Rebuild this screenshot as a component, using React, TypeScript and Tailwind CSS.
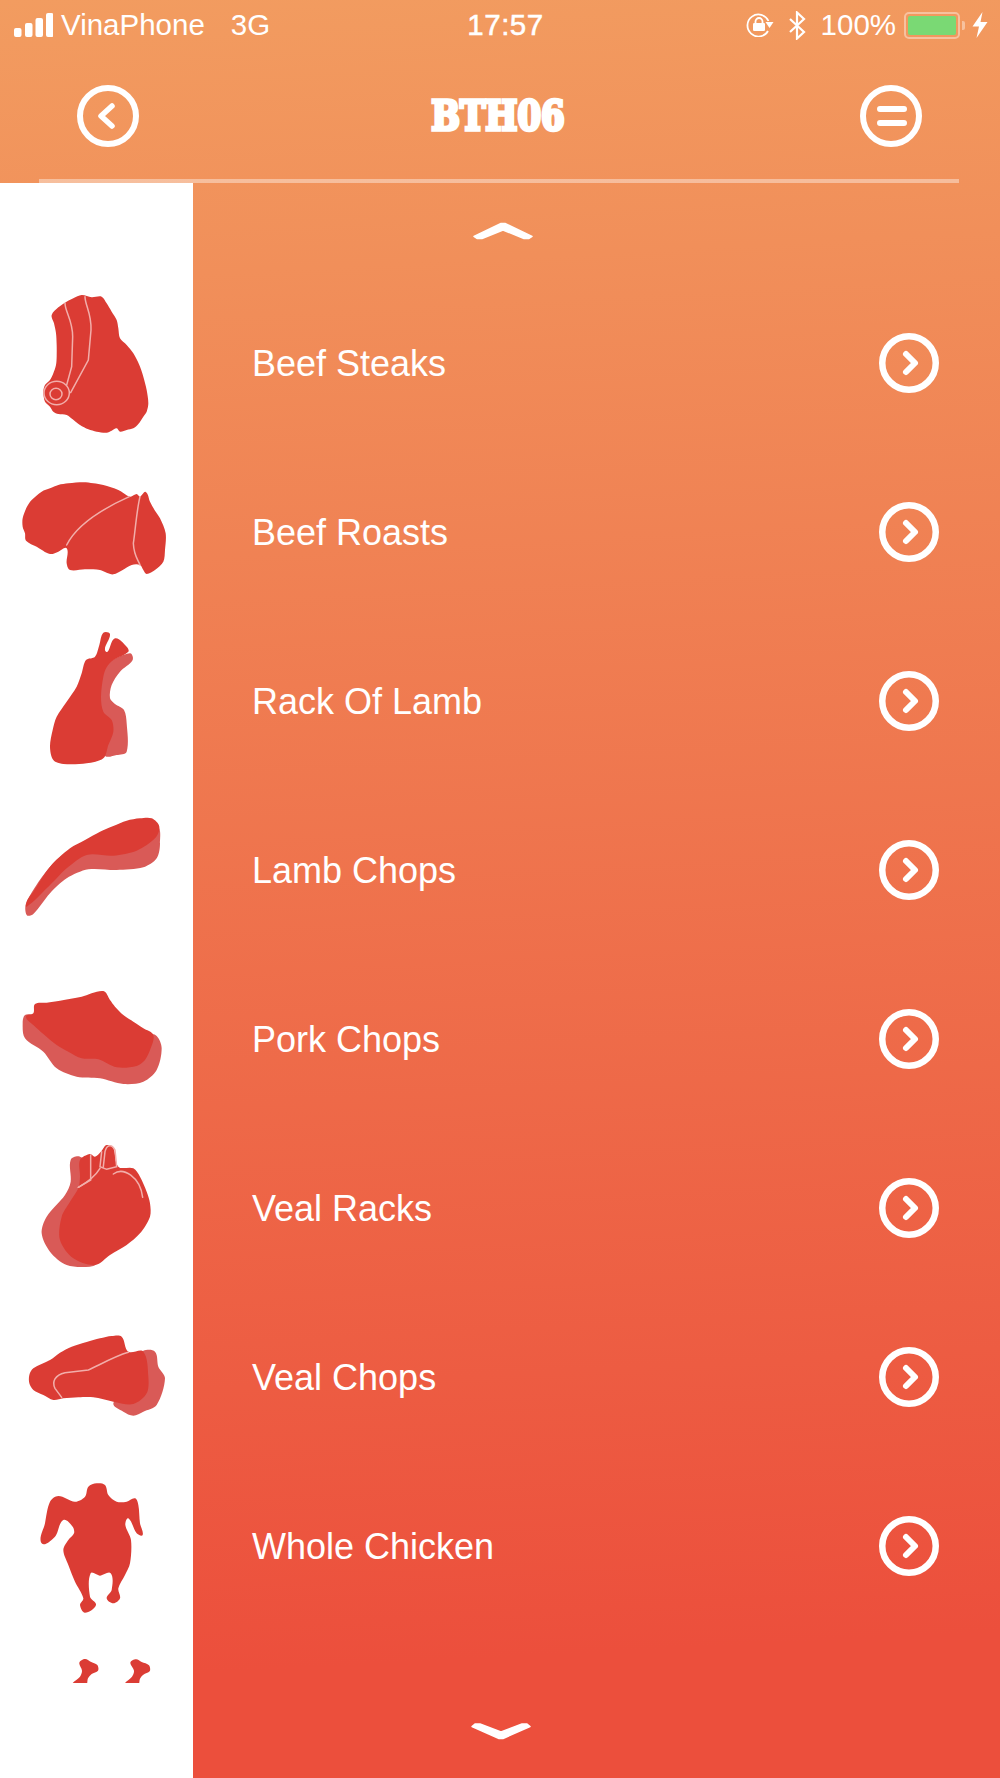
import React from "react";

type P = number[];
const path = (p: P) => {
  const n = p.length / 2;
  const g = (i: number) => {
    const k = ((i % n) + n) % n;
    return [p[k * 2], p[k * 2 + 1]];
  };
  const tan = (i: number) => {
    const a = g(i - 1), c = g(i + 1);
    const dx = c[0] - a[0], dy = c[1] - a[1];
    const l = Math.hypot(dx, dy) || 1;
    return [dx / l, dy / l];
  };
  let d = `M${p[0]} ${p[1]}`;
  for (let i = 0; i < n; i++) {
    const b = g(i), c = g(i + 1);
    const len = Math.hypot(c[0] - b[0], c[1] - b[1]) * 0.3;
    const t0 = tan(i), t1 = tan(i + 1);
    d += ` C${(b[0] + t0[0] * len).toFixed(1)} ${(b[1] + t0[1] * len).toFixed(1)} ${(c[0] - t1[0] * len).toFixed(1)} ${(c[1] - t1[1] * len).toFixed(1)} ${c[0]} ${c[1]}`;
  }
  return d + "Z";
};

const DARK = "#db3c34";
const LIGHT = "#d95a57";
const SEAM = "#f2aeaa";

type Meat = { vb: string; light?: P[]; dark: P[]; lines?: string[]; rings?: number[][]; h?: number };

const meats: Meat[] = [
  {
    vb: "0 24 579 507",
    dark: [[155,135,175,112,195,98,220,85,245,75,275,82,305,80,320,100,335,125,350,150,355,175,360,205,380,225,400,250,418,285,430,320,440,360,445,400,440,425,430,440,415,462,400,475,380,480,360,485,350,475,335,482,320,488,290,485,265,478,240,465,218,448,200,435,175,432,160,425,150,410,135,395,130,365,135,345,150,330,160,310,168,285,170,260,170,225,168,190,162,160]],
    lines: ["M195 100C195 125 218 150 218 200L215 290L200 345", "M255 80C255 105 275 130 273 180L265 270L212 368"],
    rings: [[170,369,38,35],[168,372,18,17]],
  },
  {
    vb: "0 531 579 507",
    dark: [[68,745,80,712,95,690,125,665,150,655,175,645,205,640,250,637,280,640,310,645,355,660,390,680,410,672,420,680,437,666,450,695,465,722,480,745,497,790,495,840,490,875,465,900,440,912,430,900,420,885,395,885,368,900,340,913,320,908,300,900,255,898,210,900,200,880,200,835,175,845,150,852,110,830,78,812,75,790,68,770]],
    lines: ["M388 680C310 715 230 765 200 825", "M420 680C410 720 405 790 400 820C402 860 415 870 420 885"],
  },
  {
    vb: "0 18 579 507",
    light: [[280,200,320,160,390,130,398,150,360,185,335,225,330,265,345,282,372,300,380,340,380,425,350,435,315,438,280,380]],
    dark: [[150,410,158,360,170,320,200,275,230,230,245,190,258,150,285,140,298,105,310,68,330,72,318,125,345,85,380,110,385,125,340,150,320,172,310,200,303,260,310,305,335,330,340,365,325,405,310,445,260,460,190,462,160,450]],
  },
  {
    vb: "0 525 579 507",
    light: [[80,875,160,760,250,700,470,650,480,700,470,745,430,772,350,780,265,778,200,805,150,850,100,912,80,915]],
    dark: [[80,890,82,870,100,845,150,770,210,715,255,690,300,665,340,648,380,632,420,625,455,625,478,650,465,685,410,722,340,737,260,735,200,775,170,805,140,835]],
  },
  {
    vb: "0 -18 579 507",
    light: [[68,190,75,165,100,165,300,220,440,220,470,228,485,265,470,330,430,365,370,372,300,355,230,350,170,325,130,275,75,235]],
    dark: [[78,170,100,160,105,132,140,128,180,122,245,110,310,93,330,120,345,140,370,165,400,185,430,205,460,225,452,265,435,300,410,318,350,322,295,298,245,295,205,275,170,255,130,222,100,195]],
  },
  {
    vb: "0 489 579 507",
    light: [[212,600,240,590,270,620,260,700,230,760,220,830,240,870,290,908,270,920,200,915,150,875,125,820,140,770,195,705,212,665]],
    dark: [[240,600,270,582,285,590,305,572,320,555,340,565,355,620,400,625,420,650,440,695,450,730,450,770,420,820,380,855,330,885,285,915,220,895,180,840,185,770,210,725,235,685,240,650]],
    lines: ["M272 585L272 660L235 682", "M235 682C265 665 285 650 300 625", "M305 575L300 620L320 628L350 620L345 570C335 550 320 555 315 575L310 620", "M340 642C370 620 420 650 428 712"],
  },
  {
    vb: "0 -54 579 507",
    light: [[430,122,465,125,475,170,495,205,470,285,430,305,400,317,370,305,340,280,380,250,420,200,420,140]],
    dark: [[88,195,100,175,150,150,180,128,215,110,260,96,300,85,335,78,365,80,385,125,430,125,445,200,440,250,400,282,340,275,280,262,235,262,190,265,160,270,130,255,100,240,88,220]],
    lines: ["M385 127C340 140 290 170 265 180L195 188C165 195 155 215 165 235L185 262"],
  },
  {
    vb: "0 453 579 507",
    dark: [[265,530,290,520,315,525,325,555,350,575,380,575,405,565,415,585,420,640,428,675,410,670,385,625,376,645,393,690,390,760,375,795,355,835,360,865,340,880,320,865,335,840,332,790,300,797,272,790,270,860,288,885,255,908,240,885,250,865,225,815,205,765,190,720,205,690,222,670,218,650,190,630,165,680,125,700,135,640,150,575,175,558,225,575,255,560]],
  },
  {
    vb: "0 960 579 159",
    h: 53,
    dark: [[238,1058,255,1047,272,1055,292,1065,294,1082,275,1092,264,1105,258,1125,218,1125,240,1100,246,1082],[391,1058,408,1048,425,1056,447,1066,449,1084,430,1094,420,1106,414,1125,375,1125,396,1100,402,1082]],
  },
];

const MeatIcon = ({ m }: { m: Meat }) => (
  <svg viewBox={m.vb} className={m.h ? "block w-[193px] h-[53px]" : "block w-[193px] h-[169px]"}>
    {m.light?.map((p, i) => <path key={i} d={path(p)} fill={LIGHT} />)}
    {m.dark.map((p, i) => <path key={i} d={path(p)} fill={DARK} />)}
    {m.lines?.map((d, i) => <path key={i} d={d} fill="none" stroke={SEAM} strokeWidth={4.5} strokeLinecap="round" />)}
    {m.rings?.map((r, i) => <ellipse key={i} cx={r[0]} cy={r[1]} rx={r[2]} ry={r[3]} fill="none" stroke={SEAM} strokeWidth={4.5} />)}
  </svg>
);

const Circle = ({ children, size = 62, sw = 6 }: { children: React.ReactNode; size?: number; sw?: number }) => (
  <svg width={size} height={size} viewBox={`0 0 ${size} ${size}`} fill="none" stroke="#fff" className="block shrink-0">
    <circle cx={size / 2} cy={size / 2} r={size / 2 - sw / 2} strokeWidth={sw} />
    {children}
  </svg>
);

const items = ["Beef Steaks", "Beef Roasts", "Rack Of Lamb", "Lamb Chops", "Pork Chops", "Veal Racks", "Veal Chops", "Whole Chicken"];

export default function App() {
  return (
    <div className="w-[1000px] h-[1778px] overflow-hidden bg-[linear-gradient(177deg,#f29c60_0%,#ec4f3c_92%)] text-white font-['Liberation_Sans',Arial,sans-serif]">
      <header className="h-[183px] flex flex-col">
        <div className="h-[50px] flex items-center text-[29.5px] leading-none">
          <div className="flex-1 flex items-center pl-[14px]">
            <svg width="39" height="24" viewBox="0 0 39 24" fill="#fff" className="block">
              <rect x="0" y="15" width="7.5" height="9" rx="2" />
              <rect x="11" y="10" width="7.5" height="14" rx="2" />
              <rect x="21.5" y="5" width="7.5" height="19" rx="2" />
              <rect x="32" y="0" width="7.5" height="24" rx="2" />
            </svg>
            <span className="ml-[8px]">VinaPhone</span>
            <span className="ml-[26px]">3G</span>
          </div>
          <span className="ml-[9px] font-medium tracking-[0.5px] [-webkit-text-stroke:0.5px_white]">17:57</span>
          <div className="flex-1 flex items-center justify-end pr-[12px]">
            <svg width="28" height="24" viewBox="0 0 28 24" fill="none" stroke="#fff" strokeWidth="1.8" className="block">
              <path d="M22 18A11 11 0 1 1 22.5 8" />
              <path d="M19.5 9H27.5L23.5 15Z" fill="#fff" stroke="none" />
              <path d="M9.5 10V8.5a3.5 3.5 0 0 1 7 0V10" strokeWidth="1.8" />
              <rect x="7" y="10" width="12" height="8" rx="1.3" fill="#fff" stroke="none" />
            </svg>
            <svg width="17" height="29" viewBox="0 0 17 29" fill="none" stroke="#fff" strokeWidth="2.2" className="block ml-[15px]">
              <path d="M1 8L15 21L8 27.5V1.5L15 8L1 21" />
            </svg>
            <span className="ml-[15px]">100%</span>
            <div className="ml-[8px] w-[56px] h-[27px] rounded-[5px] border-2 border-white/40 p-[2px]">
              <div className="w-full h-full bg-[#7ad974] rounded-[2px]" />
            </div>
            <div className="ml-[2px] w-[3px] h-[9px] bg-white/40 rounded-r-[2px]" />
            <svg width="16" height="26" viewBox="0 0 16 26" fill="#fff" className="block ml-[7px]">
              <path d="M10.5 0L0.5 14.5H7L4.5 26L15.5 10H8.5Z" />
            </svg>
          </div>
        </div>
        <div className="mt-[35px] h-[62px] flex items-center justify-between pl-[77px] pr-[78px]">
          <Circle>
            <path d="M35 21L24 31L35 41" strokeWidth="5.5" strokeLinecap="round" strokeLinejoin="round" />
          </Circle>
          <h1 className="font-['DejaVu_Serif',serif] font-bold text-[34px] leading-none scale-y-[1.2] [-webkit-text-stroke:3px_white] ml-[-3px]">BTH06</h1>
          <Circle>
            <path d="M20 24H44M20 38H44" strokeWidth="6" strokeLinecap="round" />
          </Circle>
        </div>
        <div className="mt-[32px] h-[4px] ml-[39px] mr-[41px] bg-white/40" />
      </header>
      <div className="flex h-[1595px]">
        <aside className="w-[193px] bg-white pt-[95px]">
          {meats.map((m, i) => <MeatIcon key={i} m={m} />)}
        </aside>
        <main className="flex-1">
          <div className="h-[95px] pt-[39px] pl-[280px]">
            <svg width="60" height="18" viewBox="0 0 60 18" className="block" fill="#fff" stroke="#fff" strokeWidth="1.5" strokeLinejoin="round">
              <path d="M1 14.5L28 1.5H32L59 14.5L56 16.5H51L30 8L9 16.5H4Z" />
            </svg>
          </div>
          {items.map((t) => (
            <div key={t} className="h-[169px] flex items-center justify-between pl-[59px] pr-[61px]">
              <span className="text-[36px] leading-none pt-[2px]">{t}</span>
              <Circle size={60} sw={6.5}>
                <path d="M27 21L36 30L27 39" strokeWidth="6" strokeLinecap="round" strokeLinejoin="round" />
              </Circle>
            </div>
          ))}
          <div className="pt-[93px] pl-[278px]">
            <svg width="60" height="17" viewBox="0 0 60 17" className="block" fill="#fff" stroke="#fff" strokeWidth="1.5" strokeLinejoin="round">
              <path d="M1 3.5L4 1H9L30 9L51 1H56L59 3.5L32 15.5H28Z" />
            </svg>
          </div>
        </main>
      </div>
    </div>
  );
}
